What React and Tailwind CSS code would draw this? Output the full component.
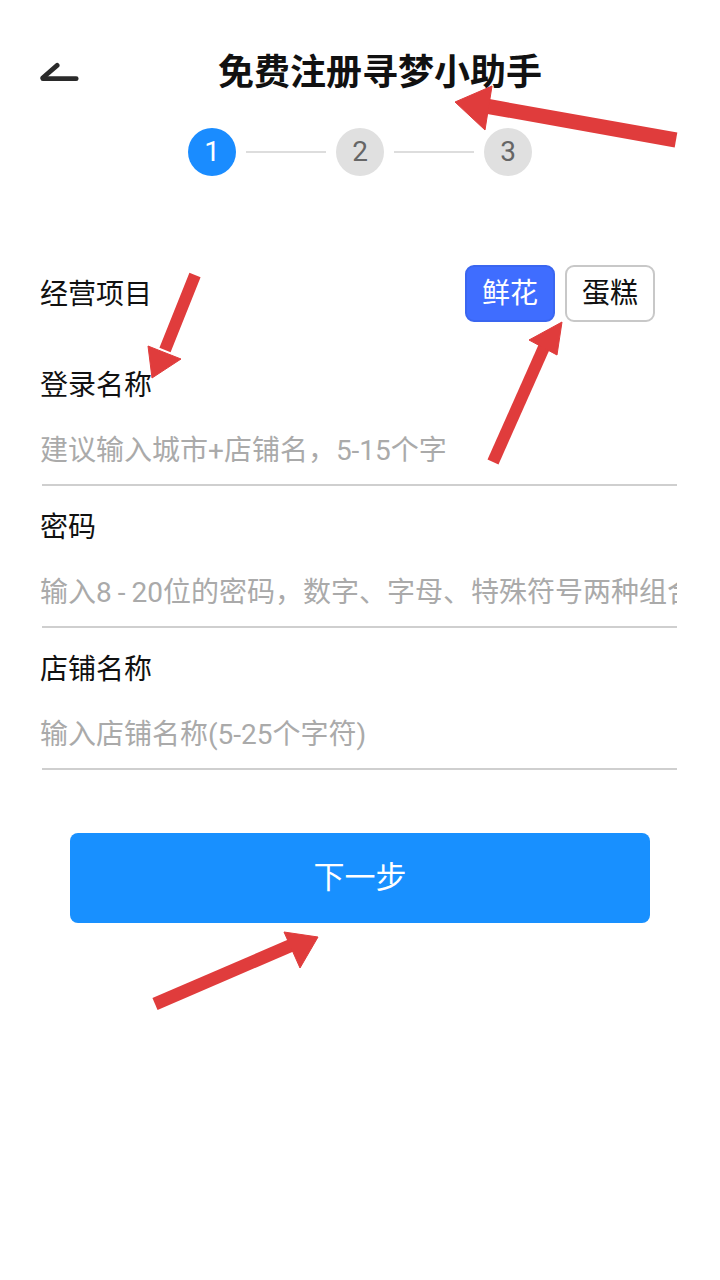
import React from "react";

const font = { fontFamily: '"Roboto", "Noto Sans CJK SC", sans-serif' };

function Field({ label, placeholder }) {
  return (
    <div className="flex flex-col">
      <div className="h-10 leading-10 text-[28px] text-[#111]">{label}</div>
      <div className="mt-[25px] h-10 leading-10 text-[28px] text-[#aaa] whitespace-nowrap overflow-hidden mr-[3px]">
        {placeholder}
      </div>
      <div className="mt-[13px] h-[2px] bg-[#cfcfcf] ml-[2px] mr-[3px]" />
    </div>
  );
}

function Step({ n, active }) {
  return (
    <div
      className={
        "w-12 h-12 rounded-full flex items-center justify-center text-[28px] " +
        (active ? "bg-[#1a8cff] text-white" : "bg-[#e0e0e0] text-[#666]")
      }
    >
      {n}
    </div>
  );
}

export default function App() {
  return (
    <div className="relative w-[720px] h-[1280px] bg-white overflow-hidden" style={font}>
      <div className="px-10 flex flex-col">
        {/* header */}
        <div className="mt-10 h-[66px] flex items-center">
          <div className="w-10 flex items-center">
            <svg width="42" height="22" viewBox="0 0 42 22">
              <path d="M3 16 L18 3" stroke="#2a2a2a" strokeWidth="5" strokeLinecap="round" fill="none" />
              <path d="M3 17 L38 17" stroke="#2a2a2a" strokeWidth="5" strokeLinecap="round" fill="none" />
            </svg>
          </div>
          <div className="flex-1 text-center text-[36px] font-bold text-[#111]">免费注册寻梦小助手</div>
        </div>

        {/* steps */}
        <div className="mt-[22px] flex items-center justify-center gap-[10px]">
          <Step n="1" active />
          <div className="w-20 h-[2px] bg-[#dddddd]" />
          <Step n="2" />
          <div className="w-20 h-[2px] bg-[#dddddd]" />
          <Step n="3" />
        </div>

        {/* business row */}
        <div className="mt-[89px] flex items-center justify-between">
          <div className="text-[28px] text-[#111] pt-[3px]">经营项目</div>
          <div className="flex gap-[10px] mr-[25px]">
            <div className="w-[90px] h-[57px] rounded-[9px] bg-[#3f6dff] border-2 border-[#3a66f0] text-white text-[28px] flex items-center justify-center">
              鲜花
            </div>
            <div className="w-[90px] h-[57px] rounded-[9px] border-2 border-[#c8c8c8] text-[#111] text-[28px] flex items-center justify-center">
              蛋糕
            </div>
          </div>
        </div>

        <div className="mt-[44px] flex flex-col gap-[22px]">
          <Field label="登录名称" placeholder="建议输入城市+店铺名，5-15个字" />
          <Field
            label="密码"
            placeholder={
              <>
                输入8<span className="mx-[6px]">-</span>20位的密码，数字、字母、特殊符号两种组合
              </>
            }
          />
          <Field label="店铺名称" placeholder="输入店铺名称(5-25个字符)" />
        </div>

        <div className="mt-[63px] mx-[30px] h-[90px] rounded-[8px] bg-[#1890ff] text-white text-[31px] flex items-center justify-center">
          下一步
        </div>
      </div>

      {/* annotation arrows */}
      <svg className="absolute inset-0 pointer-events-none" width="720" height="1280" viewBox="0 0 720 1280">
        <g fill="#e03c3c" stroke="#e03c3c" strokeLinejoin="round">
          <line x1="676" y1="140" x2="480" y2="105" strokeWidth="15" />
          <polygon points="455,102 492,86 485,130" strokeWidth="1" />
          <line x1="195" y1="275" x2="165" y2="350" strokeWidth="12" />
          <polygon points="152,378 148,346 181,359" strokeWidth="1" />
          <line x1="493" y1="462" x2="545" y2="345" strokeWidth="12" />
          <polygon points="562,322 529,340 557,355" strokeWidth="1" />
          <line x1="155" y1="1004" x2="292" y2="945" strokeWidth="13" />
          <polygon points="318,937 284,932 300,968" strokeWidth="1" />
        </g>
      </svg>
    </div>
  );
}
